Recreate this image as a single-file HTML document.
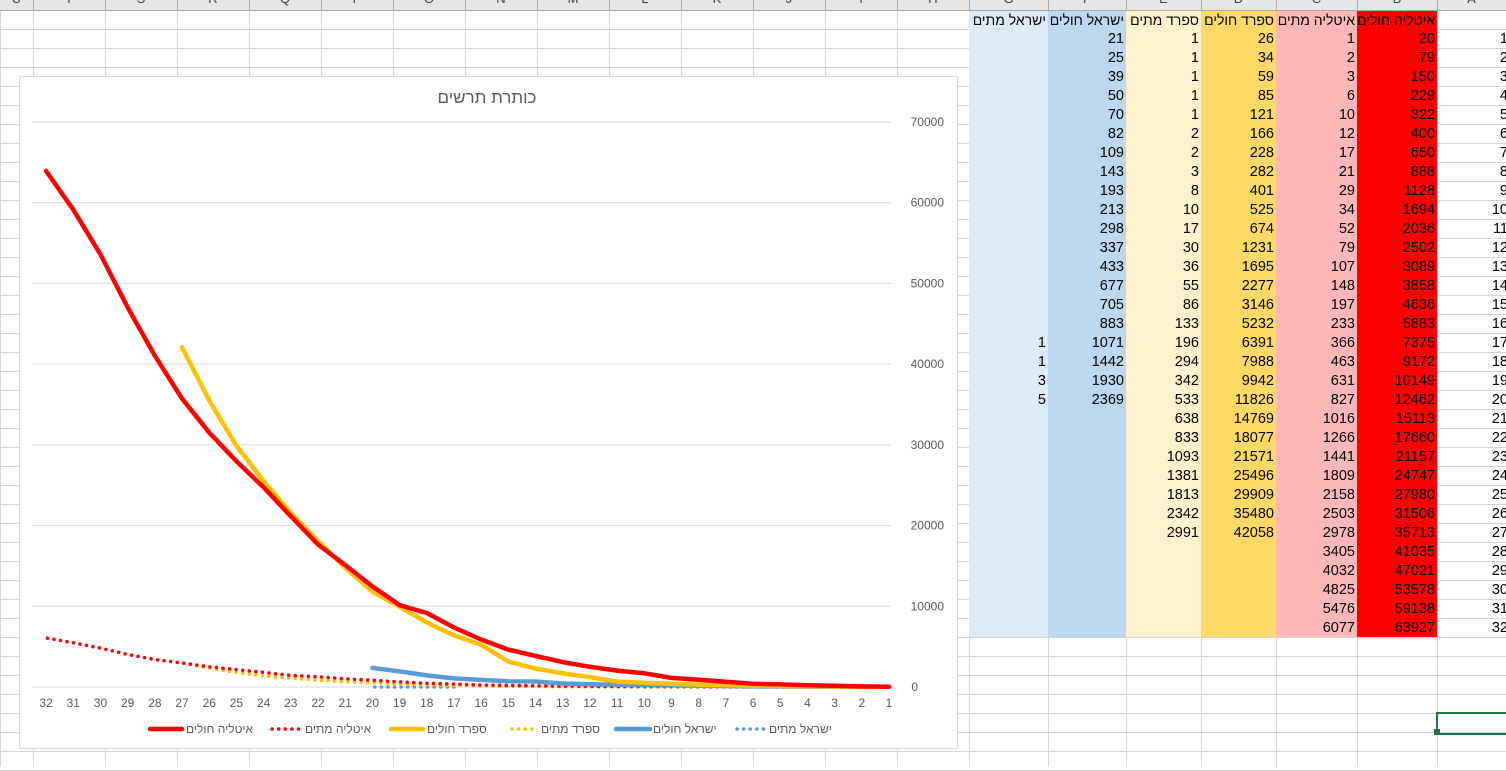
<!DOCTYPE html>
<html><head><meta charset="utf-8">
<style>
body{margin:0;width:1506px;height:766px;overflow:hidden;background:#fff;position:relative;font-family:"Liberation Sans","Noto Sans CJK JP",sans-serif;}
.c{position:absolute;font-size:14.5px;line-height:19px;text-align:right;white-space:nowrap;color:#000;box-sizing:border-box;padding-right:2px;overflow:visible;padding-top:1px}
.c.h{font-size:14px}
.vl{position:absolute;top:10px;height:756px;width:1px;background:#d4d4d4}
.hl{position:absolute;left:0;width:1506px;height:1px;background:#d4d4d4}
#hdr{position:absolute;left:0;top:0;width:1506px;height:10px;background:#e6e6e6;border-bottom:1px solid #ababab;overflow:hidden}
#hdr span{position:absolute;top:-9px;font-size:13px;color:#444;text-align:center}
</style></head><body>
<div id="grid"></div>
<div id="hdr"></div>
<svg id="chart" style="position:absolute;left:0;top:0" width="1506" height="766"></svg>
<script>
var colX=[0,33,105,177,249,321,393,465,537,609,681,753,825,897,969,1048,1126,1201,1276,1357,1437,1506];
var letters=["U","T","S","R","Q","P","O","N","M","L","K","J","I","H","G","F","E","D","C","B","A"];
var g=document.getElementById('grid'),h=document.getElementById('hdr'),s='',hs='';
for(var i=0;i<colX.length;i++){s+='<div class="vl" style="left:'+colX[i]+'px"></div>';}
for(var r=0;r<40;r++){s+='<div class="hl" style="top:'+(29+19*r)+'px"></div>';}
for(var i=0;i<letters.length;i++){hs+='<span style="left:'+colX[i]+'px;width:'+(colX[i+1]-colX[i])+'px">'+letters[i]+'</span>';if(i>0)hs+='<div style="position:absolute;top:0;height:10px;width:1px;background:#ababab;left:'+colX[i]+'px"></div>';}
h.innerHTML=hs;
var B=[20,79,150,229,322,400,650,888,1128,1694,2036,2502,3089,3858,4636,5883,7375,9172,10149,12462,15113,17660,21157,24747,27980,31506,35713,41035,47021,53578,59138,63927];
var C=[1,2,3,6,10,12,17,21,29,34,52,79,107,148,197,233,366,463,631,827,1016,1266,1441,1809,2158,2503,2978,3405,4032,4825,5476,6077];
var D=[26,34,59,85,121,166,228,282,401,525,674,1231,1695,2277,3146,5232,6391,7988,9942,11826,14769,18077,21571,25496,29909,35480,42058];
var E=[1,1,1,1,1,2,2,3,8,10,17,30,36,55,86,133,196,294,342,533,638,833,1093,1381,1813,2342,2991];
var F=[21,25,39,50,70,82,109,143,193,213,298,337,433,677,705,883,1071,1442,1930,2369];
var G=[];for(var i=0;i<16;i++)G.push(null);G.push(1,1,3,5);
var cols=[{x:1357,w:80,bg:'#ff0000',d:B,t:'איטליה חולים'},{x:1276,w:81,bg:'#ffb7b7',d:C,t:'איטליה מתים'},{x:1201,w:75,bg:'#ffd966',d:D,t:'ספרד חולים'},{x:1126,w:75,bg:'#fff2cc',d:E,t:'ספרד מתים'},{x:1048,w:78,bg:'#bdd7ee',d:F,t:'ישראל חולים'},{x:969,w:79,bg:'#ddebf7',d:G,t:'ישראל מתים'}];
cols.forEach(function(c){
 s+='<div style="position:absolute;left:'+c.x+'px;top:10px;width:'+c.w+'px;height:627px;background:'+c.bg+'"></div>';
 s+='<div class="c h" style="left:'+c.x+'px;width:'+c.w+'px;top:10px">'+c.t+'</div>';
 c.d.forEach(function(v,i){if(v!=null)s+='<div class="c" style="left:'+c.x+'px;width:'+c.w+'px;top:'+(29+19*i)+'px">'+v+'</div>';});
});
for(var i=1;i<=32;i++){s+='<div class="c" style="left:1437px;width:73px;top:'+(10+19*i)+'px">'+i+'</div>';}
s+='<div style="position:absolute;left:1436px;top:712px;width:80px;height:19px;border:2px solid #217346"></div>';
s+='<div style="position:absolute;left:1434px;top:729px;width:6px;height:6px;background:#217346"></div>';
s+='<div style="position:absolute;left:19px;top:76px;width:937px;height:671px;background:#fff;border:1px solid #d9d9d9"></div>';
g.innerHTML=s;
var sv='';
function Y(v){return 687-v*(565/70000);}
function X(d){return 889-(d-1)*27.19;}
for(var k=1;k<=7;k++){var y=Y(k*10000);sv+='<line x1="32" x2="891" y1="'+y+'" y2="'+y+'" stroke="#d9d9d9" stroke-width="1"/>';sv+='<text x="944" y="'+(y+4)+'" font-size="12" fill="#595959" text-anchor="end">'+(k*10000)+'</text>';}
sv+='<line x1="32" x2="891" y1="687" y2="687" stroke="#d9d9d9"/><text x="918" y="691" font-size="12" fill="#595959" text-anchor="end">0</text>';
for(var d=1;d<=32;d++)sv+='<text x="'+X(d)+'" y="707" font-size="12" fill="#595959" text-anchor="middle">'+d+'</text>';
sv+='<text x="487" y="103" font-size="17" fill="#595959" text-anchor="middle">כותרת תרשים</text>';
function pl(a,col,dot){var p=[];a.forEach(function(v,i){if(v!=null)p.push(X(i+1).toFixed(1)+','+Y(v).toFixed(1));});
 return '<polyline points="'+p.join(' ')+'" fill="none" stroke="'+col+'" stroke-width="'+(dot?3.5:4.5)+'" stroke-linejoin="round" stroke-linecap="round"'+(dot?' stroke-dasharray="0.1 6.5"':'')+'/>';}
sv+=pl(G,'#5b9bd5',1)+pl(E,'#ffc000',1)+pl(C,'#ff0000',1)+pl(F,'#5b9bd5',0)+pl(D,'#ffc000',0)+pl(B,'#ff0000',0);
var leg=[[150,182,186,'איטליה חולים','#ff0000',0],[272,304,305,'איטליה מתים','#ff0000',1],[391,423,427,'ספרד חולים','#ffc000',0],[512,537,541,'ספרד מתים','#ffc000',1],[616,650,653,'ישראל חולים','#5b9bd5',0],[737,765,769,'ישראל מתים','#5b9bd5',1]];
leg.forEach(function(l){sv+='<line x1="'+l[0]+'" x2="'+l[1]+'" y1="729" y2="729" stroke="'+l[4]+'" stroke-width="'+(l[5]?3.5:4.5)+'" stroke-linecap="round"'+(l[5]?' stroke-dasharray="0.1 6.5"':'')+'/>';
 sv+='<text x="'+l[2]+'" y="733" font-size="12" fill="#595959">'+l[3]+'</text>';});
document.getElementById('chart').innerHTML=sv;
</script>
</body></html>
